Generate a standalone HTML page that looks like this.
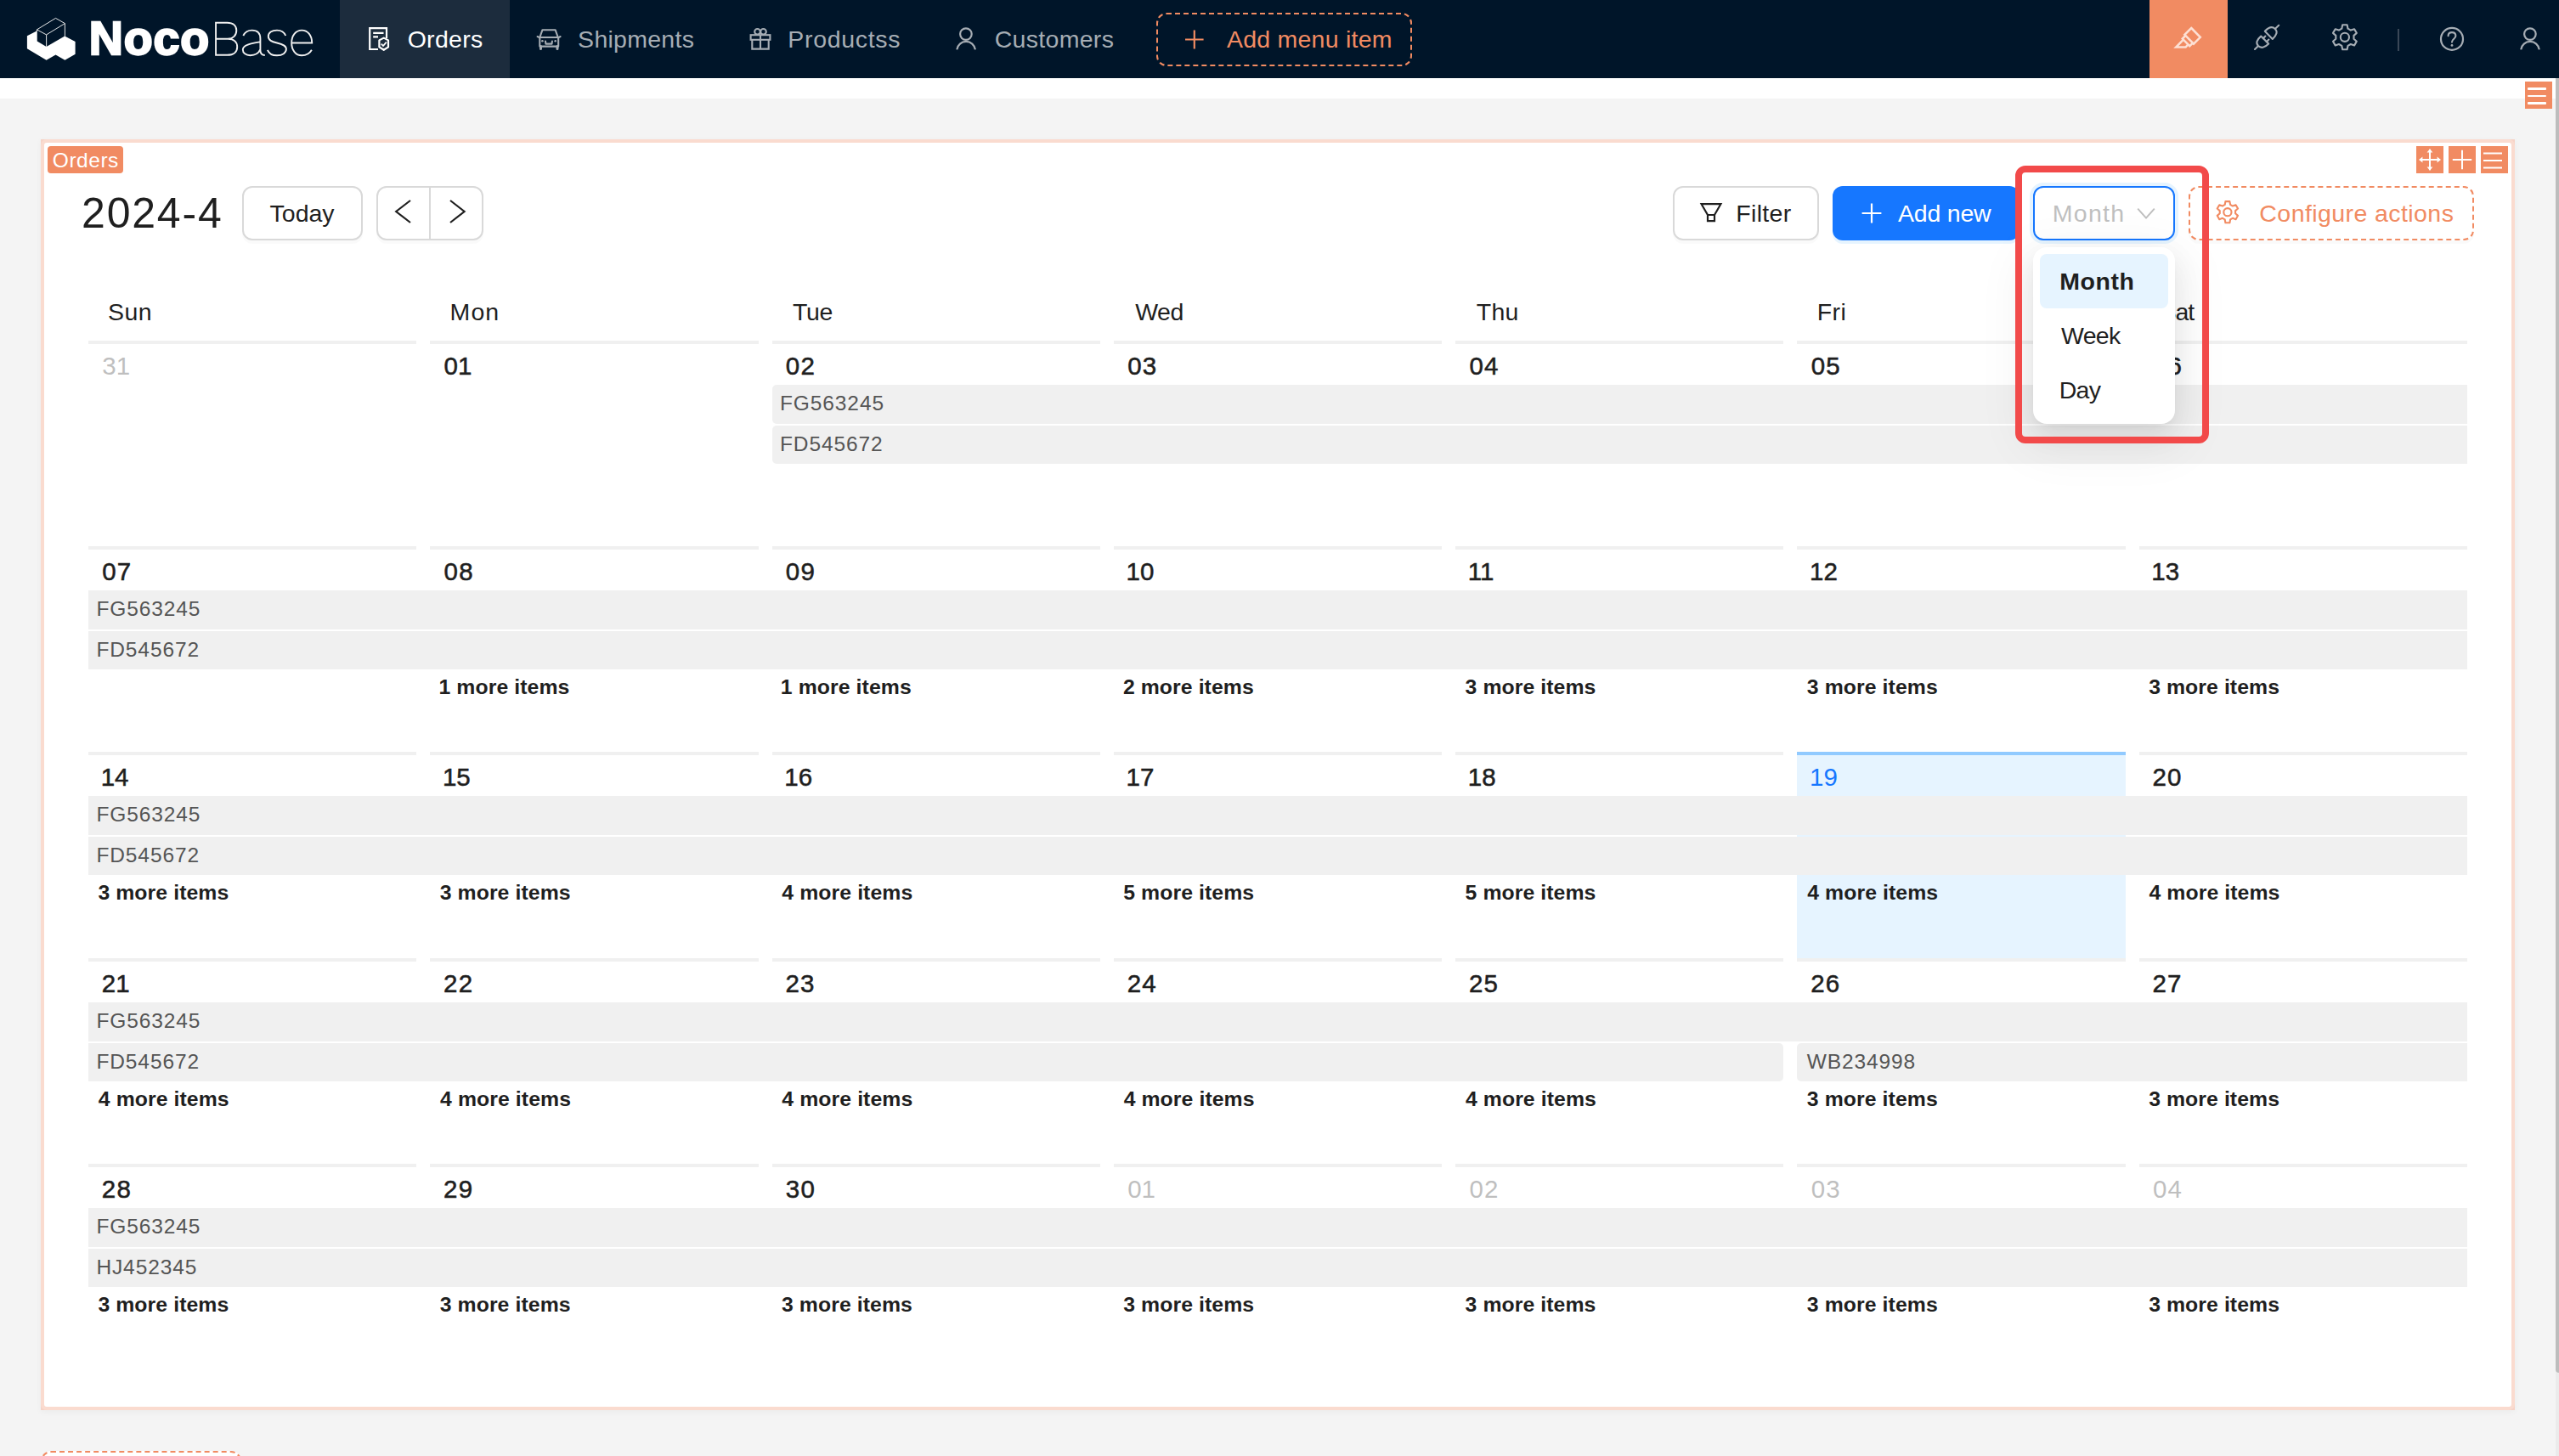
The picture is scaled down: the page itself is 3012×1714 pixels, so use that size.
<!DOCTYPE html>
<html><head><meta charset="utf-8"><title>NocoBase</title>
<style>
html,body{margin:0;padding:0;width:3012px;height:1714px;overflow:hidden;background:#f4f4f4;font-family:"Liberation Sans",sans-serif}
.a{position:absolute}
.t{position:absolute;white-space:pre;font-family:"Liberation Sans",sans-serif}
svg{position:absolute;overflow:visible}
</style></head><body>
<div class="a" style="left:0.00px;top:0.00px;width:3012.00px;height:92.00px;background:#001529"></div><div class="a" style="left:0.00px;top:92.00px;width:3008.00px;height:24.00px;background:#fff"></div><div class="a" style="left:3008.00px;top:1600.00px;width:4.00px;height:114.00px;background:#ebebeb"></div><div class="a" style="left:3008.00px;top:92.00px;width:4.00px;height:1524.00px;background:#bdbdbd;border-radius:0 0 0 4px"></div><div class="a" style="left:400.00px;top:0.00px;width:200.00px;height:92.00px;background:#1c2c3d"></div><div class="a" style="left:2530.00px;top:0.00px;width:92.00px;height:92.00px;background:#f18b62"></div><div class="a" style="left:2822.00px;top:34.00px;width:2.00px;height:26.00px;background:#3a4757"></div><div class="a" style="left:1361.00px;top:14.50px;width:301.00px;height:63.00px;border:2px dashed #f18b62;border-radius:12px;box-sizing:border-box"></div><div class="a" style="left:2972.00px;top:96.00px;width:32.00px;height:32.00px;background:#f18b62"></div><div class="a" style="left:2975.00px;top:103.25px;width:22.00px;height:2.50px;background:#fff;border-radius:1px"></div><div class="a" style="left:2975.00px;top:111.75px;width:22.00px;height:2.50px;background:#fff;border-radius:1px"></div><div class="a" style="left:2975.00px;top:120.05px;width:22.00px;height:2.50px;background:#fff;border-radius:1px"></div><div class="a" style="left:48.00px;top:164.00px;width:2912.00px;height:1496.00px;background:#f5d3c7;box-shadow:0 2px 8px rgba(0,0,0,0.04)"></div><div class="a" style="left:52.00px;top:168.00px;width:2904.00px;height:1488.00px;background:#fff;border-radius:3px;box-shadow:0 0 0 4px #fadbcf"></div><div class="a" style="left:56.00px;top:172.00px;width:89.00px;height:32.00px;background:#f18b62;border-radius:4px"></div><div class="a" style="left:2844.00px;top:172.00px;width:32.00px;height:32.00px;background:#f18b62"></div><div class="a" style="left:2882.00px;top:172.00px;width:32.00px;height:32.00px;background:#f18b62"></div><div class="a" style="left:2920.00px;top:172.00px;width:32.00px;height:32.00px;background:#f18b62"></div><div class="a" style="left:285.00px;top:219.00px;width:142.00px;height:64.00px;background:#fff;border:2px solid #d9d9d9;border-radius:12px;box-sizing:border-box;box-shadow:0 4px 0 rgba(0,0,0,0.02)"></div><div class="a" style="left:443.00px;top:219.00px;width:126.00px;height:64.00px;background:#fff;border:2px solid #d9d9d9;border-radius:12px;box-sizing:border-box;box-shadow:0 4px 0 rgba(0,0,0,0.02)"></div><div class="a" style="left:505.00px;top:219.00px;width:2.00px;height:64.00px;background:#d9d9d9"></div><div class="a" style="left:1969.00px;top:219.00px;width:172.00px;height:64.00px;background:#fff;border:2px solid #d9d9d9;border-radius:12px;box-sizing:border-box;box-shadow:0 4px 0 rgba(0,0,0,0.02)"></div><div class="a" style="left:2157.00px;top:219.00px;width:220.00px;height:64.00px;background:#1677ff;border-radius:12px;box-shadow:0 4px 0 rgba(5,145,255,0.1)"></div><div class="a" style="left:2393.00px;top:219.00px;width:167.00px;height:64.00px;background:#fff;border:2px solid #1677ff;border-radius:12px;box-sizing:border-box;box-shadow:0 0 0 4px rgba(5,145,255,0.1)"></div><div class="a" style="left:2576.00px;top:219.00px;width:336.00px;height:64.00px;background:#fff;border:2px dashed #f18b62;border-radius:12px;box-sizing:border-box;box-shadow:0 4px 0 rgba(0,0,0,0.02)"></div><div class="a" style="left:48.00px;top:1708.00px;width:236.00px;height:64.00px;background:#fff;border:2px dashed #f18b62;border-radius:12px;box-sizing:border-box"></div><div class="a" style="left:2115.43px;top:885.00px;width:386.29px;height:243.00px;background:#e6f4ff"></div><div class="a" style="left:104.00px;top:401.00px;width:386.29px;height:4.00px;background:#f0f0f0"></div><div class="a" style="left:506.29px;top:401.00px;width:386.29px;height:4.00px;background:#f0f0f0"></div><div class="a" style="left:908.57px;top:401.00px;width:386.29px;height:4.00px;background:#f0f0f0"></div><div class="a" style="left:1310.86px;top:401.00px;width:386.29px;height:4.00px;background:#f0f0f0"></div><div class="a" style="left:1713.14px;top:401.00px;width:386.29px;height:4.00px;background:#f0f0f0"></div><div class="a" style="left:2115.43px;top:401.00px;width:386.29px;height:4.00px;background:#f0f0f0"></div><div class="a" style="left:2517.71px;top:401.00px;width:386.29px;height:4.00px;background:#f0f0f0"></div><div class="a" style="left:104.00px;top:643.00px;width:386.29px;height:4.00px;background:#f0f0f0"></div><div class="a" style="left:506.29px;top:643.00px;width:386.29px;height:4.00px;background:#f0f0f0"></div><div class="a" style="left:908.57px;top:643.00px;width:386.29px;height:4.00px;background:#f0f0f0"></div><div class="a" style="left:1310.86px;top:643.00px;width:386.29px;height:4.00px;background:#f0f0f0"></div><div class="a" style="left:1713.14px;top:643.00px;width:386.29px;height:4.00px;background:#f0f0f0"></div><div class="a" style="left:2115.43px;top:643.00px;width:386.29px;height:4.00px;background:#f0f0f0"></div><div class="a" style="left:2517.71px;top:643.00px;width:386.29px;height:4.00px;background:#f0f0f0"></div><div class="a" style="left:104.00px;top:885.00px;width:386.29px;height:4.00px;background:#f0f0f0"></div><div class="a" style="left:506.29px;top:885.00px;width:386.29px;height:4.00px;background:#f0f0f0"></div><div class="a" style="left:908.57px;top:885.00px;width:386.29px;height:4.00px;background:#f0f0f0"></div><div class="a" style="left:1310.86px;top:885.00px;width:386.29px;height:4.00px;background:#f0f0f0"></div><div class="a" style="left:1713.14px;top:885.00px;width:386.29px;height:4.00px;background:#f0f0f0"></div><div class="a" style="left:2115.43px;top:885.00px;width:386.29px;height:4.00px;background:#91caff"></div><div class="a" style="left:2517.71px;top:885.00px;width:386.29px;height:4.00px;background:#f0f0f0"></div><div class="a" style="left:104.00px;top:1128.00px;width:386.29px;height:4.00px;background:#f0f0f0"></div><div class="a" style="left:506.29px;top:1128.00px;width:386.29px;height:4.00px;background:#f0f0f0"></div><div class="a" style="left:908.57px;top:1128.00px;width:386.29px;height:4.00px;background:#f0f0f0"></div><div class="a" style="left:1310.86px;top:1128.00px;width:386.29px;height:4.00px;background:#f0f0f0"></div><div class="a" style="left:1713.14px;top:1128.00px;width:386.29px;height:4.00px;background:#f0f0f0"></div><div class="a" style="left:2115.43px;top:1128.00px;width:386.29px;height:4.00px;background:#f0f0f0"></div><div class="a" style="left:2517.71px;top:1128.00px;width:386.29px;height:4.00px;background:#f0f0f0"></div><div class="a" style="left:104.00px;top:1370.00px;width:386.29px;height:4.00px;background:#f0f0f0"></div><div class="a" style="left:506.29px;top:1370.00px;width:386.29px;height:4.00px;background:#f0f0f0"></div><div class="a" style="left:908.57px;top:1370.00px;width:386.29px;height:4.00px;background:#f0f0f0"></div><div class="a" style="left:1310.86px;top:1370.00px;width:386.29px;height:4.00px;background:#f0f0f0"></div><div class="a" style="left:1713.14px;top:1370.00px;width:386.29px;height:4.00px;background:#f0f0f0"></div><div class="a" style="left:2115.43px;top:1370.00px;width:386.29px;height:4.00px;background:#f0f0f0"></div><div class="a" style="left:2517.71px;top:1370.00px;width:386.29px;height:4.00px;background:#f0f0f0"></div><div class="a" style="left:908.57px;top:453.00px;width:1995.43px;height:45.50px;background:#f0f0f0;border-radius:5px 0px 0px 5px"></div><div class="a" style="left:908.57px;top:500.50px;width:1995.43px;height:45.80px;background:#f0f0f0;border-radius:5px 0px 0px 5px"></div><div class="a" style="left:104.00px;top:695.00px;width:2800.00px;height:45.50px;background:#f0f0f0;border-radius:0px 0px 0px 0px"></div><div class="a" style="left:104.00px;top:937.00px;width:2800.00px;height:45.50px;background:#f0f0f0;border-radius:0px 0px 0px 0px"></div><div class="a" style="left:104.00px;top:1180.00px;width:2800.00px;height:45.50px;background:#f0f0f0;border-radius:0px 0px 0px 0px"></div><div class="a" style="left:104.00px;top:1422.00px;width:2800.00px;height:45.50px;background:#f0f0f0;border-radius:0px 0px 0px 0px"></div><div class="a" style="left:104.00px;top:742.50px;width:2800.00px;height:45.80px;background:#f0f0f0;border-radius:0px 0px 0px 0px"></div><div class="a" style="left:104.00px;top:984.50px;width:2800.00px;height:45.80px;background:#f0f0f0;border-radius:0px 0px 0px 0px"></div><div class="a" style="left:104.00px;top:1227.50px;width:1995.43px;height:45.80px;background:#f0f0f0;border-radius:0px 5px 5px 0px"></div><div class="a" style="left:2115.43px;top:1227.50px;width:788.57px;height:45.80px;background:#f0f0f0;border-radius:5px 0px 0px 5px"></div><div class="a" style="left:104.00px;top:1469.50px;width:2800.00px;height:45.80px;background:#f0f0f0;border-radius:0px 0px 0px 0px"></div>
<svg width="3012" height="100" style="left:0;top:0;z-index:5" viewBox="0 0 3012 100"><path d="M31.9,42.2 L43.7,36.2 L43.7,48.6 L54.6,54.9 L76.2,42.6 L88.6,49.0 L88.6,63.8 L76.4,70.8 L65.5,64.4 L54.6,70.8 L31.9,57.2 Z" fill="#fff"/><path d="M43.4,34.9 L65.5,21.4 L76.4,27.6 L54.6,40.9 Z M54.6,40.9 L54.6,54.9 M76.4,27.6 L76.4,42.8 M43.4,34.9 L43.4,37" stroke="#f0f0f0" stroke-width="0.95" fill="none" stroke-linejoin="round"/><g stroke="#f0f0f0" stroke-width="1.9" fill="none" stroke-linecap="butt" stroke-linejoin="miter"><path d="M254.06,26.8 L267.4,26.8 C274.5,26.8 278.3,30.5 278.3,35.8 C278.3,41.5 274.5,45.7 268,45.7 L254.06,45.7 M254.06,45.7 L268.3,45.7 C275.5,45.7 279.2,49.8 279.2,55.2 C279.2,61 275,64.8 267.5,64.8 L254.06,64.8 M254.06,25.85 L254.06,65.75"/><path d="M286.3,42 C288.5,37.5 292,35.6 296.5,35.6 C302.5,35.6 306.4,39 306.4,45.5 L306.4,59 C306.4,62.5 308,65 311.8,65 M306.4,49.3 C297,51 285.8,52.5 285.8,58.5 C285.8,62.5 289.5,65.2 294.5,65.2 C300,65.2 304.5,62.5 306.4,58.2"/><path d="M336.2,42 C334.5,37.8 330.8,35.6 326,35.6 C320,35.6 315.8,38.5 315.8,42.8 C315.8,47.5 320,49 326,50.5 C333,52.2 336.9,53.8 336.9,57.6 C336.9,62.3 332.5,65.3 326,65.3 C320.5,65.3 316.5,62.8 314.9,58.8"/><path d="M343.2,50.5 L367.2,50.5 C367.2,41.5 362,35.6 355.2,35.6 C348,35.6 343.2,42 343.2,50.5 C343.2,59 348,65.3 355.2,65.3 C360.5,65.3 364.8,62.5 366.9,58.8"/></g></svg>
<svg width="3012" height="1714" style="left:0;top:0;z-index:5" viewBox="0 0 3012 1714" fill="none" stroke-linejoin="round" stroke-linecap="round"><g stroke="#fff" stroke-width="2.2" stroke-linecap="butt" stroke-linejoin="miter"><path d="M445,58 L435.2,58 L435.2,33.2 L455,33.2 L455,45"/><path d="M439.2,38.8 L451.5,38.8 M439.2,43.3 L445,43.3"/><path d="M451.7,44.6 L457,47.4 L457,55.4 L451.7,58.8 L446.4,55.4 L446.4,47.4 Z" stroke-linejoin="round"/><path d="M448.8,51.6 L451,54 L454.8,49.6" stroke-width="1.8"/></g><g stroke="#a6adb4" stroke-width="2.1"><path d="M638.5,35.2 L653.6,35.2 L656.8,44 L635.3,44 Z"/><path d="M635.3,44 L635.3,54.6 L657.2,54.6 L657.2,44"/><path d="M636.5,54.6 L636.5,57.4 M656,54.6 L656,57.4" stroke-width="3"/><path d="M632.6,43 L635.3,44.4 M659.6,43 L657,44.4"/><path d="M642,48.6 L642.4,51.6 L649.5,51.6 L649.9,48.6"/></g><circle cx="638.4" cy="48.3" r="1.3" fill="#a6adb4"/><circle cx="653.7" cy="48.3" r="1.3" fill="#a6adb4"/><g stroke="#a6adb4" stroke-width="2.1" stroke-linejoin="miter" stroke-linecap="butt"><rect x="883.6" y="41.2" width="22.8" height="5.6"/><path d="M885.3,46.8 L885.3,57.6 L904.7,57.6 L904.7,46.8"/><path d="M895,41.2 L895,57.6"/><circle cx="891.5" cy="37.3" r="3.3"/><circle cx="898.5" cy="37.3" r="3.3"/></g><g stroke="#a6adb4" stroke-width="2.2"><circle cx="1136.9" cy="40.1" r="6.8"/><path d="M1126.3,58.3 A10.9,10.9 0 0 1 1147.9,58.3" stroke-linecap="butt"/></g><path d="M1395,46.5 L1416.6,46.5 M1405.8,35.6 L1405.8,57.4" stroke="#f18b62" stroke-width="2.2" stroke-linecap="butt"/><g stroke="#fde0d4" stroke-width="2.5" stroke-linejoin="miter" stroke-linecap="butt" fill="none"><path d="M2579.2,33.0 L2589.8,43.8 L2582.0,51.6 L2571.4,40.8 Z"/><path d="M2572.45,41.87 L2568.77,45.55 L2577.27,54.21 L2580.95,50.53"/><path d="M2569.9,46.7 L2561.2,55.6 L2572.6,55.6 L2575.4,52.4"/></g><g stroke="#a6adb4" stroke-width="2.1"><path d="M2665.8,36.8 L2674.8,45.9 C2680,41 2681,37 2677.8,33.9 C2674.5,30.8 2670.5,31.8 2665.8,36.8 Z"/><path d="M2678.6,33.2 L2682.2,29.8"/><path d="M2661.2,42.6 L2670.2,51.6 C2665.5,56.5 2661,57 2658,54.1 C2655,51 2656,47 2661.2,42.6 Z"/><path d="M2657.6,54.6 L2654,58"/><path d="M2663.8,45.2 L2666.4,42.6 M2667.8,49.2 L2670.4,46.6"/></g><path d="M2756.30,33.68 L2757.20,29.30 L2762.60,29.30 L2763.50,33.68 L2766.87,35.62 L2771.11,34.21 L2773.81,38.89 L2770.47,41.86 L2770.47,45.74 L2773.81,48.71 L2771.11,53.39 L2766.87,51.98 L2763.50,53.92 L2762.60,58.30 L2757.20,58.30 L2756.30,53.92 L2752.93,51.98 L2748.69,53.39 L2745.99,48.71 L2749.33,45.74 L2749.33,41.86 L2745.99,38.89 L2748.69,34.21 L2752.93,35.62 Z" stroke="#a6adb4" stroke-width="2.1"/><circle cx="2759.9" cy="43.8" r="5.1" stroke="#a6adb4" stroke-width="2.1"/><circle cx="2886" cy="45.9" r="13" stroke="#a6adb4" stroke-width="2.2"/><path d="M2881.6,42.3 C2881.6,39.3 2883.6,38.1 2886,38.1 C2888.6,38.1 2890.4,39.8 2890.4,42.2 C2890.4,45.6 2886,45.8 2886,49.6" stroke="#a6adb4" stroke-width="2.1"/><circle cx="2886" cy="53.4" r="1.4" fill="#a6adb4"/><g stroke="#a6adb4" stroke-width="2.2"><circle cx="2977.9" cy="40.1" r="6.8"/><path d="M2967.2,58.3 A10.9,10.9 0 0 1 2988.8,58.3" stroke-linecap="butt"/></g><g stroke="#fff" stroke-width="2" stroke-linecap="butt"><path d="M2847.8,188 L2872.2,188 M2860,175.8 L2860,200.2"/></g><path d="M2847.2,188 L2851.4,184.6 L2851.4,191.4 Z M2872.8,188 L2868.6,184.6 L2868.6,191.4 Z M2860,175.2 L2856.6,179.4 L2863.4,179.4 Z M2860,200.8 L2856.6,196.6 L2863.4,196.6 Z" fill="#fff"/><path d="M2886.8,188 L2909.2,188 M2898,176.8 L2898,199.2" stroke="#fff" stroke-width="2" stroke-linecap="butt"/><path d="M2923,180.6 L2945,180.6 M2923,189 L2945,189 M2923,197.4 L2945,197.4" stroke="#fff" stroke-width="2" stroke-linecap="butt"/><path d="M483,236 L466.2,249 L483,262" stroke="#1f1f1f" stroke-width="2.2" stroke-linecap="butt" stroke-linejoin="miter"/><path d="M530,236 L546.6,249 L530,262" stroke="#1f1f1f" stroke-width="2.2" stroke-linecap="butt" stroke-linejoin="miter"/><path d="M2002.6,240.2 L2025.4,240.2 L2018,253 L2018,260.2 L2010,260.2 L2010,253 Z M2010,253 L2018,253" stroke="#1f1f1f" stroke-width="2.2" stroke-linejoin="miter"/><path d="M2191.6,251 L2214.4,251 M2203,239.6 L2203,262.4" stroke="#fff" stroke-width="2.2" stroke-linecap="butt"/><path d="M2516.2,245.6 L2526,256.6 L2535.8,245.6" stroke="#bfbfbf" stroke-width="2" stroke-linecap="butt" stroke-linejoin="miter"/><path d="M2618.70,240.95 L2619.40,237.10 L2624.40,237.10 L2625.10,240.95 L2627.88,242.55 L2631.56,241.23 L2634.06,245.57 L2631.08,248.10 L2631.08,251.30 L2634.06,253.83 L2631.56,258.17 L2627.88,256.85 L2625.10,258.45 L2624.40,262.30 L2619.40,262.30 L2618.70,258.45 L2615.92,256.85 L2612.24,258.17 L2609.74,253.83 L2612.72,251.30 L2612.72,248.10 L2609.74,245.57 L2612.24,241.23 L2615.92,242.55 Z" stroke="#f18b62" stroke-width="2.1"/><circle cx="2621.9" cy="249.7" r="4.6" stroke="#f18b62" stroke-width="2.1"/></svg>
<div class="t" style="left:917.96px;top:463.26px;font-size:24.5px;line-height:24.5px;font-weight:400;color:#555555;letter-spacing:0.900px;">FG563245</div>
<div class="t" style="left:917.96px;top:510.76px;font-size:24.5px;line-height:24.5px;font-weight:400;color:#555555;letter-spacing:0.900px;">FD545672</div>
<div class="t" style="left:113.39px;top:705.26px;font-size:24.5px;line-height:24.5px;font-weight:400;color:#555555;letter-spacing:0.900px;">FG563245</div>
<div class="t" style="left:113.39px;top:947.26px;font-size:24.5px;line-height:24.5px;font-weight:400;color:#555555;letter-spacing:0.900px;">FG563245</div>
<div class="t" style="left:113.39px;top:1190.26px;font-size:24.5px;line-height:24.5px;font-weight:400;color:#555555;letter-spacing:0.900px;">FG563245</div>
<div class="t" style="left:113.39px;top:1432.26px;font-size:24.5px;line-height:24.5px;font-weight:400;color:#555555;letter-spacing:0.900px;">FG563245</div>
<div class="t" style="left:113.39px;top:752.76px;font-size:24.5px;line-height:24.5px;font-weight:400;color:#555555;letter-spacing:0.900px;">FD545672</div>
<div class="t" style="left:113.39px;top:994.76px;font-size:24.5px;line-height:24.5px;font-weight:400;color:#555555;letter-spacing:0.900px;">FD545672</div>
<div class="t" style="left:113.39px;top:1237.76px;font-size:24.5px;line-height:24.5px;font-weight:400;color:#555555;letter-spacing:0.900px;">FD545672</div>
<div class="t" style="left:2126.73px;top:1237.76px;font-size:24.5px;line-height:24.5px;font-weight:400;color:#555555;letter-spacing:0.900px;">WB234998</div>
<div class="t" style="left:113.39px;top:1479.76px;font-size:24.5px;line-height:24.5px;font-weight:400;color:#555555;letter-spacing:0.900px;">HJ452345</div>
<div class="t" style="left:127.11px;top:352.87px;font-size:28.5px;line-height:28.5px;font-weight:400;color:#1f1f1f;letter-spacing:0.391px;">Sun</div>
<div class="t" style="left:529.57px;top:352.87px;font-size:28.5px;line-height:28.5px;font-weight:400;color:#1f1f1f;letter-spacing:1.093px;">Mon</div>
<div class="t" style="left:932.95px;top:352.87px;font-size:28.5px;line-height:28.5px;font-weight:400;color:#1f1f1f;letter-spacing:-0.376px;">Tue</div>
<div class="t" style="left:1336.20px;top:352.87px;font-size:28.5px;line-height:28.5px;font-weight:400;color:#1f1f1f;letter-spacing:-0.493px;">Wed</div>
<div class="t" style="left:1737.75px;top:352.87px;font-size:28.5px;line-height:28.5px;font-weight:400;color:#1f1f1f;letter-spacing:0.218px;">Thu</div>
<div class="t" style="left:2138.77px;top:352.87px;font-size:28.5px;line-height:28.5px;font-weight:400;color:#1f1f1f;letter-spacing:0.387px;">Fri</div>
<div class="t" style="left:2542.61px;top:352.87px;font-size:28.5px;line-height:28.5px;font-weight:400;color:#1f1f1f;letter-spacing:-1.142px;">Sat</div>
<div class="t" style="left:120.28px;top:416.42px;font-size:29.5px;line-height:29.5px;font-weight:400;color:#bfbfbf;letter-spacing:0.000px;">31</div>
<div class="t" style="left:522.56px;top:416.42px;font-size:29.5px;line-height:29.5px;font-weight:400;color:#1f1f1f;letter-spacing:0.000px;-webkit-text-stroke:0.55px #1f1f1f;">01</div>
<div class="t" style="left:924.85px;top:416.42px;font-size:29.5px;line-height:29.5px;font-weight:400;color:#1f1f1f;letter-spacing:1.200px;-webkit-text-stroke:0.55px #1f1f1f;">02</div>
<div class="t" style="left:1327.14px;top:416.42px;font-size:29.5px;line-height:29.5px;font-weight:400;color:#1f1f1f;letter-spacing:1.200px;-webkit-text-stroke:0.55px #1f1f1f;">03</div>
<div class="t" style="left:1729.42px;top:416.42px;font-size:29.5px;line-height:29.5px;font-weight:400;color:#1f1f1f;letter-spacing:1.200px;-webkit-text-stroke:0.55px #1f1f1f;">04</div>
<div class="t" style="left:2131.71px;top:416.42px;font-size:29.5px;line-height:29.5px;font-weight:400;color:#1f1f1f;letter-spacing:1.200px;-webkit-text-stroke:0.55px #1f1f1f;">05</div>
<div class="t" style="left:2533.99px;top:416.42px;font-size:29.5px;line-height:29.5px;font-weight:400;color:#1f1f1f;letter-spacing:1.200px;-webkit-text-stroke:0.55px #1f1f1f;">06</div>
<div class="t" style="left:120.28px;top:658.42px;font-size:29.5px;line-height:29.5px;font-weight:400;color:#1f1f1f;letter-spacing:1.200px;-webkit-text-stroke:0.55px #1f1f1f;">07</div>
<div class="t" style="left:522.56px;top:658.42px;font-size:29.5px;line-height:29.5px;font-weight:400;color:#1f1f1f;letter-spacing:1.200px;-webkit-text-stroke:0.55px #1f1f1f;">08</div>
<div class="t" style="left:924.85px;top:658.42px;font-size:29.5px;line-height:29.5px;font-weight:400;color:#1f1f1f;letter-spacing:1.200px;-webkit-text-stroke:0.55px #1f1f1f;">09</div>
<div class="t" style="left:1325.51px;top:658.42px;font-size:29.5px;line-height:29.5px;font-weight:400;color:#1f1f1f;letter-spacing:0.000px;-webkit-text-stroke:0.55px #1f1f1f;">10</div>
<div class="t" style="left:1727.80px;top:658.42px;font-size:29.5px;line-height:29.5px;font-weight:400;color:#1f1f1f;letter-spacing:0.000px;-webkit-text-stroke:0.55px #1f1f1f;">11</div>
<div class="t" style="left:2130.08px;top:658.42px;font-size:29.5px;line-height:29.5px;font-weight:400;color:#1f1f1f;letter-spacing:0.000px;-webkit-text-stroke:0.55px #1f1f1f;">12</div>
<div class="t" style="left:2532.37px;top:658.42px;font-size:29.5px;line-height:29.5px;font-weight:400;color:#1f1f1f;letter-spacing:0.000px;-webkit-text-stroke:0.55px #1f1f1f;">13</div>
<div class="t" style="left:118.66px;top:900.42px;font-size:29.5px;line-height:29.5px;font-weight:400;color:#1f1f1f;letter-spacing:0.000px;-webkit-text-stroke:0.55px #1f1f1f;">14</div>
<div class="t" style="left:520.94px;top:900.42px;font-size:29.5px;line-height:29.5px;font-weight:400;color:#1f1f1f;letter-spacing:0.000px;-webkit-text-stroke:0.55px #1f1f1f;">15</div>
<div class="t" style="left:923.23px;top:900.42px;font-size:29.5px;line-height:29.5px;font-weight:400;color:#1f1f1f;letter-spacing:0.000px;-webkit-text-stroke:0.55px #1f1f1f;">16</div>
<div class="t" style="left:1325.51px;top:900.42px;font-size:29.5px;line-height:29.5px;font-weight:400;color:#1f1f1f;letter-spacing:0.000px;-webkit-text-stroke:0.55px #1f1f1f;">17</div>
<div class="t" style="left:1727.80px;top:900.42px;font-size:29.5px;line-height:29.5px;font-weight:400;color:#1f1f1f;letter-spacing:0.000px;-webkit-text-stroke:0.55px #1f1f1f;">18</div>
<div class="t" style="left:2130.08px;top:900.42px;font-size:29.5px;line-height:29.5px;font-weight:400;color:#1677ff;letter-spacing:0.000px;">19</div>
<div class="t" style="left:2533.53px;top:900.42px;font-size:29.5px;line-height:29.5px;font-weight:400;color:#1f1f1f;letter-spacing:1.200px;-webkit-text-stroke:0.55px #1f1f1f;">20</div>
<div class="t" style="left:119.82px;top:1143.42px;font-size:29.5px;line-height:29.5px;font-weight:400;color:#1f1f1f;letter-spacing:0.000px;-webkit-text-stroke:0.55px #1f1f1f;">21</div>
<div class="t" style="left:522.10px;top:1143.42px;font-size:29.5px;line-height:29.5px;font-weight:400;color:#1f1f1f;letter-spacing:1.200px;-webkit-text-stroke:0.55px #1f1f1f;">22</div>
<div class="t" style="left:924.39px;top:1143.42px;font-size:29.5px;line-height:29.5px;font-weight:400;color:#1f1f1f;letter-spacing:1.200px;-webkit-text-stroke:0.55px #1f1f1f;">23</div>
<div class="t" style="left:1326.67px;top:1143.42px;font-size:29.5px;line-height:29.5px;font-weight:400;color:#1f1f1f;letter-spacing:1.200px;-webkit-text-stroke:0.55px #1f1f1f;">24</div>
<div class="t" style="left:1728.96px;top:1143.42px;font-size:29.5px;line-height:29.5px;font-weight:400;color:#1f1f1f;letter-spacing:1.200px;-webkit-text-stroke:0.55px #1f1f1f;">25</div>
<div class="t" style="left:2131.25px;top:1143.42px;font-size:29.5px;line-height:29.5px;font-weight:400;color:#1f1f1f;letter-spacing:1.200px;-webkit-text-stroke:0.55px #1f1f1f;">26</div>
<div class="t" style="left:2533.53px;top:1143.42px;font-size:29.5px;line-height:29.5px;font-weight:400;color:#1f1f1f;letter-spacing:1.200px;-webkit-text-stroke:0.55px #1f1f1f;">27</div>
<div class="t" style="left:119.82px;top:1385.42px;font-size:29.5px;line-height:29.5px;font-weight:400;color:#1f1f1f;letter-spacing:1.200px;-webkit-text-stroke:0.55px #1f1f1f;">28</div>
<div class="t" style="left:522.10px;top:1385.42px;font-size:29.5px;line-height:29.5px;font-weight:400;color:#1f1f1f;letter-spacing:1.200px;-webkit-text-stroke:0.55px #1f1f1f;">29</div>
<div class="t" style="left:924.85px;top:1385.42px;font-size:29.5px;line-height:29.5px;font-weight:400;color:#1f1f1f;letter-spacing:1.200px;-webkit-text-stroke:0.55px #1f1f1f;">30</div>
<div class="t" style="left:1327.14px;top:1385.42px;font-size:29.5px;line-height:29.5px;font-weight:400;color:#bfbfbf;letter-spacing:0.000px;">01</div>
<div class="t" style="left:1729.42px;top:1385.42px;font-size:29.5px;line-height:29.5px;font-weight:400;color:#bfbfbf;letter-spacing:1.200px;">02</div>
<div class="t" style="left:2131.71px;top:1385.42px;font-size:29.5px;line-height:29.5px;font-weight:400;color:#bfbfbf;letter-spacing:1.200px;">03</div>
<div class="t" style="left:2533.99px;top:1385.42px;font-size:29.5px;line-height:29.5px;font-weight:400;color:#bfbfbf;letter-spacing:1.200px;">04</div>
<div class="t" style="left:516.54px;top:797.00px;font-size:24.8px;line-height:24.8px;font-weight:700;color:#1f1f1f;letter-spacing:0.080px;">1 more items</div>
<div class="t" style="left:918.82px;top:797.00px;font-size:24.8px;line-height:24.8px;font-weight:700;color:#1f1f1f;letter-spacing:0.080px;">1 more items</div>
<div class="t" style="left:1321.88px;top:797.00px;font-size:24.8px;line-height:24.8px;font-weight:700;color:#1f1f1f;letter-spacing:0.080px;">2 more items</div>
<div class="t" style="left:1724.56px;top:797.00px;font-size:24.8px;line-height:24.8px;font-weight:700;color:#1f1f1f;letter-spacing:0.080px;">3 more items</div>
<div class="t" style="left:2126.84px;top:797.00px;font-size:24.8px;line-height:24.8px;font-weight:700;color:#1f1f1f;letter-spacing:0.080px;">3 more items</div>
<div class="t" style="left:2529.13px;top:797.00px;font-size:24.8px;line-height:24.8px;font-weight:700;color:#1f1f1f;letter-spacing:0.080px;">3 more items</div>
<div class="t" style="left:115.41px;top:1039.00px;font-size:24.8px;line-height:24.8px;font-weight:700;color:#1f1f1f;letter-spacing:0.080px;">3 more items</div>
<div class="t" style="left:517.70px;top:1039.00px;font-size:24.8px;line-height:24.8px;font-weight:700;color:#1f1f1f;letter-spacing:0.080px;">3 more items</div>
<div class="t" style="left:920.37px;top:1039.00px;font-size:24.8px;line-height:24.8px;font-weight:700;color:#1f1f1f;letter-spacing:0.080px;">4 more items</div>
<div class="t" style="left:1322.27px;top:1039.00px;font-size:24.8px;line-height:24.8px;font-weight:700;color:#1f1f1f;letter-spacing:0.080px;">5 more items</div>
<div class="t" style="left:1724.56px;top:1039.00px;font-size:24.8px;line-height:24.8px;font-weight:700;color:#1f1f1f;letter-spacing:0.080px;">5 more items</div>
<div class="t" style="left:2127.23px;top:1039.00px;font-size:24.8px;line-height:24.8px;font-weight:700;color:#1f1f1f;letter-spacing:0.080px;">4 more items</div>
<div class="t" style="left:2529.51px;top:1039.00px;font-size:24.8px;line-height:24.8px;font-weight:700;color:#1f1f1f;letter-spacing:0.080px;">4 more items</div>
<div class="t" style="left:115.80px;top:1282.00px;font-size:24.8px;line-height:24.8px;font-weight:700;color:#1f1f1f;letter-spacing:0.080px;">4 more items</div>
<div class="t" style="left:518.09px;top:1282.00px;font-size:24.8px;line-height:24.8px;font-weight:700;color:#1f1f1f;letter-spacing:0.080px;">4 more items</div>
<div class="t" style="left:920.37px;top:1282.00px;font-size:24.8px;line-height:24.8px;font-weight:700;color:#1f1f1f;letter-spacing:0.080px;">4 more items</div>
<div class="t" style="left:1322.66px;top:1282.00px;font-size:24.8px;line-height:24.8px;font-weight:700;color:#1f1f1f;letter-spacing:0.080px;">4 more items</div>
<div class="t" style="left:1724.94px;top:1282.00px;font-size:24.8px;line-height:24.8px;font-weight:700;color:#1f1f1f;letter-spacing:0.080px;">4 more items</div>
<div class="t" style="left:2126.84px;top:1282.00px;font-size:24.8px;line-height:24.8px;font-weight:700;color:#1f1f1f;letter-spacing:0.080px;">3 more items</div>
<div class="t" style="left:2529.13px;top:1282.00px;font-size:24.8px;line-height:24.8px;font-weight:700;color:#1f1f1f;letter-spacing:0.080px;">3 more items</div>
<div class="t" style="left:115.41px;top:1524.00px;font-size:24.8px;line-height:24.8px;font-weight:700;color:#1f1f1f;letter-spacing:0.080px;">3 more items</div>
<div class="t" style="left:517.70px;top:1524.00px;font-size:24.8px;line-height:24.8px;font-weight:700;color:#1f1f1f;letter-spacing:0.080px;">3 more items</div>
<div class="t" style="left:919.98px;top:1524.00px;font-size:24.8px;line-height:24.8px;font-weight:700;color:#1f1f1f;letter-spacing:0.080px;">3 more items</div>
<div class="t" style="left:1322.27px;top:1524.00px;font-size:24.8px;line-height:24.8px;font-weight:700;color:#1f1f1f;letter-spacing:0.080px;">3 more items</div>
<div class="t" style="left:1724.56px;top:1524.00px;font-size:24.8px;line-height:24.8px;font-weight:700;color:#1f1f1f;letter-spacing:0.080px;">3 more items</div>
<div class="t" style="left:2126.84px;top:1524.00px;font-size:24.8px;line-height:24.8px;font-weight:700;color:#1f1f1f;letter-spacing:0.080px;">3 more items</div>
<div class="t" style="left:2529.13px;top:1524.00px;font-size:24.8px;line-height:24.8px;font-weight:700;color:#1f1f1f;letter-spacing:0.080px;">3 more items</div>
<div class="t" style="left:61.85px;top:176.66px;font-size:24.5px;line-height:24.5px;font-weight:400;color:#ffffff;letter-spacing:0.528px;">Orders</div>
<div class="t" style="left:96.06px;top:226.36px;font-size:50px;line-height:50px;font-weight:400;color:#1f1f1f;letter-spacing:1.800px;">2024-4</div>
<div class="t" style="left:317.55px;top:237.07px;font-size:28.5px;line-height:28.5px;font-weight:400;color:#1f1f1f;letter-spacing:-0.001px;">Today</div>
<div class="t" style="left:2043.37px;top:236.67px;font-size:28.5px;line-height:28.5px;font-weight:400;color:#1f1f1f;letter-spacing:0.287px;">Filter</div>
<div class="t" style="left:2234.00px;top:236.67px;font-size:28.5px;line-height:28.5px;font-weight:400;color:#ffffff;letter-spacing:-0.210px;">Add new</div>
<div class="t" style="left:2415.77px;top:236.67px;font-size:28.5px;line-height:28.5px;font-weight:400;color:#bfbfbf;letter-spacing:1.304px;">Month</div>
<div class="t" style="left:2659.36px;top:236.87px;font-size:28.5px;line-height:28.5px;font-weight:400;color:#f18b62;letter-spacing:0.421px;">Configure actions</div>
<div class="t" style="left:479.66px;top:32.17px;font-size:28.5px;line-height:28.5px;font-weight:400;color:#ffffff;letter-spacing:0.285px;">Orders</div>
<div class="t" style="left:680.11px;top:32.07px;font-size:28.5px;line-height:28.5px;font-weight:400;color:#a6adb4;letter-spacing:0.266px;">Shipments</div>
<div class="t" style="left:927.37px;top:32.07px;font-size:28.5px;line-height:28.5px;font-weight:400;color:#a6adb4;letter-spacing:0.675px;">Productss</div>
<div class="t" style="left:1170.66px;top:32.07px;font-size:28.5px;line-height:28.5px;font-weight:400;color:#a6adb4;letter-spacing:0.306px;">Customers</div>
<div class="t" style="left:1444.00px;top:32.07px;font-size:28.5px;line-height:28.5px;font-weight:400;color:#f18b62;letter-spacing:0.233px;">Add menu item</div>
<div class="t" style="left:104.83px;top:18.01px;font-size:55.5px;line-height:55.5px;font-weight:700;color:#ffffff;letter-spacing:0.845px;-webkit-text-stroke:2.4px #fff;">Noco</div>
<div class="a" style="left:2393px;top:291px;width:167px;height:208px;background:#fff;border-radius:16px;box-shadow:0 12px 32px 0 rgba(0,0,0,0.08),0 6px 12px -8px rgba(0,0,0,0.12),0 18px 56px 16px rgba(0,0,0,0.05);z-index:10"></div><div class="a" style="left:2401px;top:299px;width:151px;height:64px;background:#e6f4ff;border-radius:8px;z-index:10"></div><div style="position:absolute;left:0;top:0;z-index:11"><div class="t" style="left:2424.22px;top:317.27px;font-size:28.5px;line-height:28.5px;font-weight:700;color:#1f1f1f;letter-spacing:0.550px;">Month</div>
<div class="t" style="left:2426.00px;top:381.07px;font-size:28.5px;line-height:28.5px;font-weight:400;color:#1f1f1f;letter-spacing:-0.727px;">Week</div>
<div class="t" style="left:2423.77px;top:444.87px;font-size:28.5px;line-height:28.5px;font-weight:400;color:#1f1f1f;letter-spacing:-0.728px;">Day</div></div><div class="a" style="left:2372px;top:194.5px;width:228px;height:327.5px;border:8px solid #f24a4a;border-radius:12px;box-sizing:border-box;z-index:12"></div>
</body></html>
